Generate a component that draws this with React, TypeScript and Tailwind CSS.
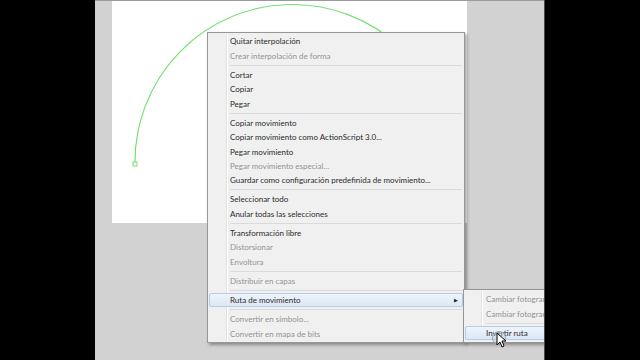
import React from "react";

type Item = { label: string; disabled?: boolean; sep?: boolean; active?: boolean; sub?: boolean };

const items: Item[] = [
  { label: "Quitar interpolación" },
  { label: "Crear interpolación de forma", disabled: true },
  { label: "", sep: true },
  { label: "Cortar" },
  { label: "Copiar" },
  { label: "Pegar" },
  { label: "", sep: true },
  { label: "Copiar movimiento" },
  { label: "Copiar movimiento como ActionScript 3.0..." },
  { label: "Pegar movimiento" },
  { label: "Pegar movimiento especial...", disabled: true },
  { label: "Guardar como configuración predefinida de movimiento..." },
  { label: "", sep: true },
  { label: "Seleccionar todo" },
  { label: "Anular todas las selecciones" },
  { label: "", sep: true },
  { label: "Transformación libre" },
  { label: "Distorsionar", disabled: true },
  { label: "Envoltura", disabled: true },
  { label: "", sep: true },
  { label: "Distribuir en capas", disabled: true },
  { label: "", sep: true },
  { label: "Ruta de movimiento", active: true, sub: true },
  { label: "", sep: true },
  { label: "Convertir en símbolo...", disabled: true },
  { label: "Convertir en mapa de bits", disabled: true },
];

const subItems: Item[] = [
  { label: "Cambiar fotograma inicial", disabled: true },
  { label: "Cambiar fotograma final", disabled: true },
  { label: "", sep: true },
  { label: "Invertir ruta", active: true },
];

const Row = ({ item, gutter }: { item: Item; gutter: number }) => {
  if (item.sep) {
    return (
      <div className="h-[4.8px] flex items-center" style={{ paddingLeft: gutter + 2 }}>
        <div className="h-px flex-1 bg-[#dadada] mr-[2px]"></div>
      </div>
    );
  }
  return (
    <div
      className={
        "relative h-[14.4px] flex items-center pr-[4px] mx-[1px] rounded-[2px] border " +
        (item.active
          ? "border-[#b4cde9] bg-gradient-to-b from-[#eef4fb] to-[#dce8f6]"
          : "border-transparent")
      }
    >
      <span
        className={"whitespace-nowrap " + (item.disabled ? "text-[#929292]" : "text-[#2a2a2a]")}
        style={{ paddingLeft: gutter }}
      >
        {item.label}
      </span>
      {item.sub && <span className="ml-auto text-[5px] text-[#222]">▶</span>}
    </div>
  );
};

const App = () => {
  return (
    <div
      className="w-[640px] h-[360px] flex bg-black overflow-hidden text-[8px] leading-none"
      style={{ fontFamily: "Lato, 'Open Sans', sans-serif" }}
    >
      <div className="w-[95px] bg-black"></div>
      <div className="relative w-[449px] h-full bg-[#d2d2d2] border-t border-[#9a9a9a] overflow-hidden">
        {/* stage */}
        <div className="ml-[17px] w-[355px] h-[222px] bg-white">
          <svg width="355" height="222" className="block">
            <path
              d="M 23 163 A 157 157 0 0 1 338 159"
              fill="none"
              stroke="#74e074"
              strokeWidth="1.2"
            />
            <rect x="21" y="161" width="4" height="4" fill="white" stroke="#74e074" strokeWidth="1" />
          </svg>
        </div>

        {/* context menu */}
        <div className="absolute left-[112px] top-[31px] w-[258px] bg-[#f0f0f0] border border-[#979797] py-[1px] shadow-[2px_2px_3px_rgba(0,0,0,0.35)]">
          <div className="absolute left-[18px] top-[1px] bottom-[1px] w-px bg-[#e2e3e3]"></div>
          <div className="absolute left-[19px] top-[1px] bottom-[1px] w-px bg-white"></div>
          {items.map((it, i) => (
            <Row key={i} item={it} gutter={20} />
          ))}
        </div>

        {/* submenu */}
        <div className="absolute left-[368px] top-[288px] w-[110px] bg-[#f0f0f0] border border-[#979797] py-[2px] shadow-[2px_2px_3px_rgba(0,0,0,0.35)]">
          <div className="absolute left-[17px] top-[1px] bottom-[1px] w-px bg-[#e2e3e3]"></div>
          <div className="absolute left-[18px] top-[1px] bottom-[1px] w-px bg-white"></div>
          {subItems.map((it, i) => (
            <Row key={i} item={it} gutter={20} />
          ))}
        </div>

        {/* cursor with click ring */}
        <div className="absolute left-[397px] top-[330px] w-[14px] h-[14px] rounded-full border border-[#9aa4b0] bg-[#c8d2de]/40"></div>
        <svg className="absolute left-[401px] top-[331px]" width="10" height="16" viewBox="0 0 10 16">
          <path d="M1 1 L1 13 L4 10 L6 15 L8 14 L6 9 L10 9 Z" fill="white" stroke="black" strokeWidth="1" />
        </svg>
      </div>
      <div className="w-px bg-[#4a4a4a]"></div>
      <div className="flex-1 bg-black"></div>
    </div>
  );
};

export default App;
